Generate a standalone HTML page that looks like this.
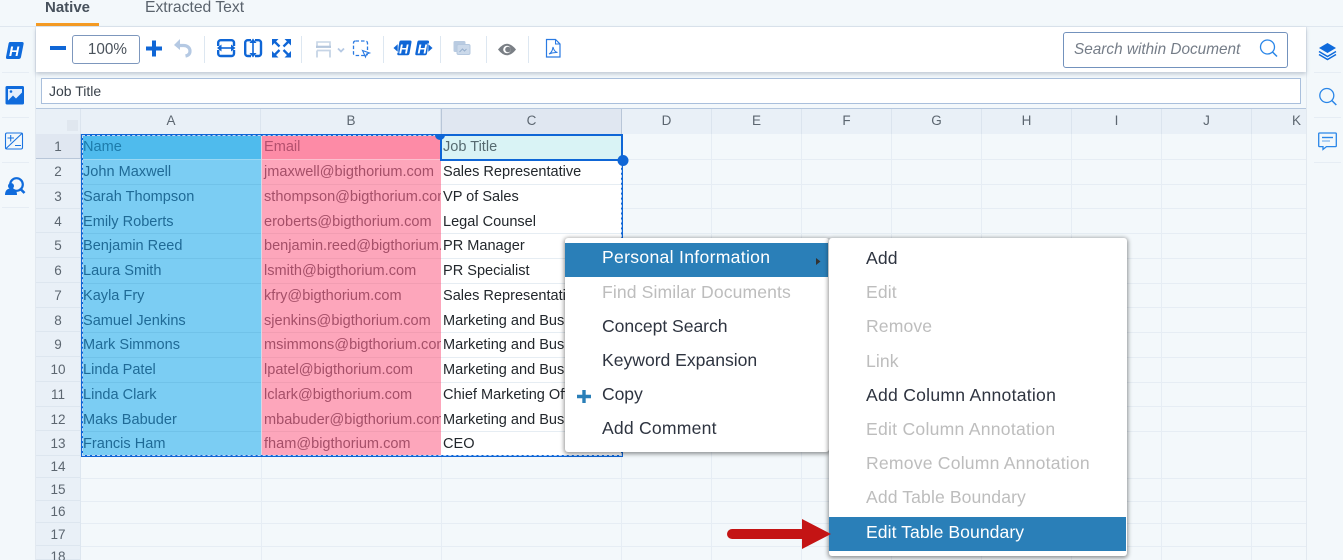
<!DOCTYPE html>
<html><head><meta charset="utf-8">
<style>
html,body{margin:0;padding:0;width:1343px;height:560px;overflow:hidden;background:#f3f8fb}
body{position:relative;font-family:"Liberation Sans",sans-serif;color:#2f3640}
div,span{position:absolute;white-space:nowrap;box-sizing:border-box}
svg{position:absolute;overflow:visible}
.h{background:#e6edf4}
.ch{top:109px;height:25px;background:#e9f0f7;border-right:1px solid #dbe4ee;text-align:center;font-size:13.5px;line-height:23px;color:#5c6670}
.rh{left:36px;width:45px;background:#e9f0f7;border-bottom:1px solid #dde6ef;border-right:1px solid #dde6ef;text-align:center;font-size:13.5px;color:#5c6670}
.a,.b,.c{height:25px;line-height:25px;font-size:14.55px;overflow:hidden;padding-left:2px}
.a{left:81px;width:180px;background:#7bcdf3;color:#1f6a96;border-bottom:1px solid #70c2e9}
.b{left:262px;width:179px;background:#fda6bb;color:#a54f68;border-bottom:1px solid #f29db2}
.c{left:441px;width:180px;background:#fff;color:#22272c;border-bottom:1px solid #e6edf3}
.m{background:#fff;border-radius:3px;box-shadow:0 1px 4px 1px rgba(0,0,0,.42)}
.i{font-size:17.6px;line-height:22px;color:#2e3440;letter-spacing:.1px}
.d{color:#bdbdbd}
.w{color:#fff}
</style></head>
<body>
<!-- tabs -->
<div style="left:0;top:26px;width:1343px;height:1px;background:#dfe7ef"></div>
<div style="left:45px;top:-2px;font-size:15px;line-height:20px;font-weight:bold;color:#47515c">Native</div>
<div style="left:145px;top:-2px;font-size:15.7px;line-height:20px;color:#5a636d">Extracted Text</div>
<div style="left:36px;top:23px;width:63px;height:3px;background:#f59b23"></div>
<!-- side rails -->
<div style="left:35px;top:27px;width:1px;height:533px;background:#e2e9f0"></div>
<div style="left:1306px;top:27px;width:1px;height:533px;background:#e2e9f0"></div>
<div class="h" style="left:2px;top:72px;width:27px;height:1px"></div>
<div class="h" style="left:2px;top:117px;width:27px;height:1px"></div>
<div class="h" style="left:2px;top:162px;width:27px;height:1px"></div>
<div class="h" style="left:2px;top:207px;width:27px;height:1px"></div>
<div class="h" style="left:1314px;top:72px;width:27px;height:1px"></div>
<div class="h" style="left:1314px;top:117px;width:27px;height:1px"></div>
<div class="h" style="left:1314px;top:162px;width:27px;height:1px"></div>
<svg style="left:0;top:0" width="36" height="210">
<path d="M10 42h12q2 0 1.600 2l-2.600 13q-.4 2-2.400 2H7.500q-1.800 0-1.500-2l2.500-13q.3-2 1.500-2z" fill="#0f6bdc"/>
<text x="9" y="56" font-family="Liberation Sans" font-size="14" font-weight="bold" font-style="italic" fill="#fff">H</text>
<rect x="5.500" y="86" width="18.500" height="18.500" rx="1.500" fill="#0f6bdc"/><rect x="8" y="89" width="14" height="11.500" fill="#e2eefc"/><path d="M8 100.500l5-5 3 3 6-6v8z" fill="#0f6bdc"/><circle cx="11" cy="91.500" r="1.300" fill="#0f6bdc"/>
<rect x="5.500" y="133" width="17" height="16" rx="1.500" fill="none" stroke="#1b74e0" stroke-width="1.100"/><path d="M5.500 149L22.500 133" stroke="#1b74e0" stroke-width="1.100"/><path d="M7.500 138h6.500M10.700 135v6.500M15 145.500h6" stroke="#1b74e0" stroke-width="1.100"/>
<circle cx="16.500" cy="184.500" r="6.300" fill="none" stroke="#0f6bdc" stroke-width="2.200"/><path d="M21 189.500l3.500 3.500" stroke="#0f6bdc" stroke-width="2.600"/><circle cx="11" cy="186" r="3" fill="#0f6bdc"/><path d="M5 195q0-6.500 6-6.500t6 6.500z" fill="#0f6bdc"/>
</svg>
<svg style="left:1306px;top:0" width="37" height="170">
<path d="M21.500 43l8.500 5-8.500 5-8.500-5z" fill="#0f6bdc"/><path d="M13 51.500l8.500 5 8.500-5M13 54.500l8.500 5 8.500-5" fill="none" stroke="#0f6bdc" stroke-width="1.500"/>
<circle cx="20.800" cy="95.500" r="7" fill="none" stroke="#2a86e8" stroke-width="1.300"/><path d="M25.800 100.500l4.500 4.500" stroke="#2a86e8" stroke-width="1.500"/>
<path d="M13.500 133h16q.8 0 .8.800v12q0 .8-.8.800h-9l-3.500 2.800v-2.800h-3.500q-.8 0-.8-.8v-12q0-.8.800-.8z" fill="none" stroke="#2a86e8" stroke-width="1.300"/><path d="M16 137.500h11" stroke="#2a86e8" stroke-width="1.400"/><path d="M16 141h8" stroke="#8dbdf0" stroke-width="1.400"/>
</svg>
<!-- grid headers -->
<div style="left:36px;top:108px;width:1270px;height:1px;background:#b5c7de"></div>
<div style="left:36px;top:109px;width:45px;height:25px;background:#e9f0f7;border-right:1px solid #dbe4ee"></div>
<div style="left:67px;top:120px;width:11px;height:11px;background:#e0e7ef"></div>
<div class="ch" style="left:81px;width:180px;padding-left:1px">A</div>
<div class="ch" style="left:261px;width:180px;padding-left:1px">B</div>
<div class="ch" style="left:441px;width:181px;background:#e0e7f1;border-left:1px solid #b8c6d8;border-right:1px solid #b8c6d8">C</div>
<div class="ch" style="left:622px;width:90px">D</div>
<div class="ch" style="left:712px;width:90px">E</div>
<div class="ch" style="left:802px;width:90px">F</div>
<div class="ch" style="left:892px;width:90px">G</div>
<div class="ch" style="left:982px;width:90px">H</div>
<div class="ch" style="left:1072px;width:90px">I</div>
<div class="ch" style="left:1162px;width:90px">J</div>
<div class="ch" style="left:1252px;width:54px;border-right:0;text-align:left;padding-left:40px">K</div>
<!-- grid lines -->
<div class="h" style="left:81px;top:159px;width:1225px;height:1px"></div>
<div class="h" style="left:81px;top:184px;width:1225px;height:1px"></div>
<div class="h" style="left:81px;top:208px;width:1225px;height:1px"></div>
<div class="h" style="left:81px;top:233px;width:1225px;height:1px"></div>
<div class="h" style="left:81px;top:258px;width:1225px;height:1px"></div>
<div class="h" style="left:81px;top:283px;width:1225px;height:1px"></div>
<div class="h" style="left:81px;top:307px;width:1225px;height:1px"></div>
<div class="h" style="left:81px;top:332px;width:1225px;height:1px"></div>
<div class="h" style="left:81px;top:357px;width:1225px;height:1px"></div>
<div class="h" style="left:81px;top:382px;width:1225px;height:1px"></div>
<div class="h" style="left:81px;top:406px;width:1225px;height:1px"></div>
<div class="h" style="left:81px;top:431px;width:1225px;height:1px"></div>
<div class="h" style="left:81px;top:478px;width:1225px;height:1px"></div>
<div class="h" style="left:81px;top:501px;width:1225px;height:1px"></div>
<div class="h" style="left:81px;top:523px;width:1225px;height:1px"></div>
<div class="h" style="left:81px;top:546px;width:1225px;height:1px"></div>
<div class="h" style="left:261px;top:457px;width:1px;height:103px"></div>
<div class="h" style="left:441px;top:457px;width:1px;height:103px"></div>
<div class="h" style="left:621px;top:134px;width:1px;height:426px"></div>
<div class="h" style="left:711px;top:134px;width:1px;height:426px"></div>
<div class="h" style="left:801px;top:134px;width:1px;height:426px"></div>
<div class="h" style="left:891px;top:134px;width:1px;height:426px"></div>
<div class="h" style="left:981px;top:134px;width:1px;height:426px"></div>
<div class="h" style="left:1071px;top:134px;width:1px;height:426px"></div>
<div class="h" style="left:1161px;top:134px;width:1px;height:426px"></div>
<div class="h" style="left:1251px;top:134px;width:1px;height:426px"></div>
<!-- row headers -->
<div class="rh" style="top:134px;height:25px;line-height:26px;background:#e0e7f1;border-bottom:1px solid #b8c6d8;border-right:1px solid #b8c6d8">1</div>
<div class="rh" style="top:159px;height:25px;line-height:26px">2</div>
<div class="rh" style="top:184px;height:25px;line-height:25px">3</div>
<div class="rh" style="top:209px;height:24px;line-height:26px">4</div>
<div class="rh" style="top:233px;height:25px;line-height:25px">5</div>
<div class="rh" style="top:258px;height:25px;line-height:25px">6</div>
<div class="rh" style="top:283px;height:25px;line-height:25px">7</div>
<div class="rh" style="top:308px;height:24px;line-height:26px">8</div>
<div class="rh" style="top:332px;height:25px;line-height:25px">9</div>
<div class="rh" style="top:357px;height:25px;line-height:25px">10</div>
<div class="rh" style="top:382px;height:25px;line-height:25px">11</div>
<div class="rh" style="top:407px;height:24px;line-height:26px">12</div>
<div class="rh" style="top:431px;height:25px;line-height:25px">13</div>
<div class="rh" style="top:456px;height:22px;line-height:21px">14</div>
<div class="rh" style="top:478px;height:23px;line-height:23px">15</div>
<div class="rh" style="top:501px;height:22px;line-height:21px">16</div>
<div class="rh" style="top:523px;height:23px;line-height:23px">17</div>
<div class="rh" style="top:546px;height:14px;line-height:21px">18</div>
<!-- cells -->
<div class="a" style="top:135px;background:#4fbbed;color:#1d7bab;border-bottom:1px solid #9ad8f4">Name</div><div class="b" style="top:135px;background:#fd8ba6;color:#b4506e;border-bottom:1px solid #fcc0ce">Email</div><div class="c" style="top:135px;background:#d9f3f5;color:#566a70">Job Title</div>
<div class="a" style="top:160px">John Maxwell</div><div class="b" style="top:160px">jmaxwell@bigthorium.com</div><div class="c" style="top:160px">Sales Representative</div>
<div class="a" style="top:185px">Sarah Thompson</div><div class="b" style="top:185px">sthompson@bigthorium.com</div><div class="c" style="top:185px">VP of Sales</div>
<div class="a" style="top:209px;line-height:26px">Emily Roberts</div><div class="b" style="top:209px;line-height:26px">eroberts@bigthorium.com</div><div class="c" style="top:209px;line-height:26px">Legal Counsel</div>
<div class="a" style="top:234px">Benjamin Reed</div><div class="b" style="top:234px">benjamin.reed@bigthorium.com</div><div class="c" style="top:234px">PR Manager</div>
<div class="a" style="top:259px">Laura Smith</div><div class="b" style="top:259px">lsmith@bigthorium.com</div><div class="c" style="top:259px">PR Specialist</div>
<div class="a" style="top:284px">Kayla Fry</div><div class="b" style="top:284px">kfry@bigthorium.com</div><div class="c" style="top:284px">Sales Representative</div>
<div class="a" style="top:308px;line-height:26px">Samuel Jenkins</div><div class="b" style="top:308px;line-height:26px">sjenkins@bigthorium.com</div><div class="c" style="top:308px;line-height:26px">Marketing and Business</div>
<div class="a" style="top:333px">Mark Simmons</div><div class="b" style="top:333px">msimmons@bigthorium.com</div><div class="c" style="top:333px">Marketing and Business</div>
<div class="a" style="top:358px">Linda Patel</div><div class="b" style="top:358px">lpatel@bigthorium.com</div><div class="c" style="top:358px">Marketing and Business</div>
<div class="a" style="top:383px">Linda Clark</div><div class="b" style="top:383px">lclark@bigthorium.com</div><div class="c" style="top:383px">Chief Marketing Officer</div>
<div class="a" style="top:407px;line-height:26px">Maks Babuder</div><div class="b" style="top:407px;line-height:26px">mbabuder@bigthorium.com</div><div class="c" style="top:407px;line-height:26px">Marketing and Business</div>
<div class="a" style="top:432px;height:24px">Francis Ham</div><div class="b" style="top:432px;height:24px">fham@bigthorium.com</div><div class="c" style="top:432px;height:24px">CEO</div>
<div style="left:261px;top:135px;width:1px;height:321px;background:#d9d6e4"></div>
<!-- selection -->
<div style="left:81px;top:134px;width:542px;height:323px;border:2px solid #0f66d6"></div>
<div style="left:82px;top:135px;width:540px;height:321px;border:1px dashed rgba(255,255,255,.75)"></div>
<div style="left:440px;top:134px;width:183px;height:27px;border:2px solid #0f66d6"></div>
<svg style="left:0;top:0" width="1343" height="560"><path d="M435 135a5 5 0 0 0 10 0z" fill="#0f66d6"/><circle cx="623" cy="160.500" r="5.500" fill="#0f66d6"/></svg>
<!-- toolbar -->
<div style="left:36px;top:27px;width:1270px;height:45px;background:#fff;box-shadow:0 2px 4px rgba(70,90,120,.3)"></div>
<div style="left:41px;top:78px;width:1260px;height:26px;background:#fff;border:1px solid #a9bfdc;font-size:14px;line-height:25px;padding-left:7px;color:#3a424b">Job Title</div>
<div style="left:72px;top:35px;width:68px;height:29px;background:#fff;border:1px solid #7d97bd;border-radius:3px;text-align:right;padding-right:12px;font-size:15.3px;line-height:28px;color:#4a525b">100%</div>
<div style="left:1063px;top:32px;width:225px;height:36px;background:#fff;border:1px solid #7392bd;border-radius:3px;font-size:15.35px;font-style:italic;line-height:33px;padding-left:10px;color:#757d88">Search within Document</div>
<svg style="left:0;top:0" width="1343" height="75">
<!-- minus plus undo -->
<path d="M50 48h16" stroke="#0f66d6" stroke-width="4"/>
<path d="M146 48.500h16M154 40.500v16" stroke="#0f66d6" stroke-width="4"/>
<path d="M178 45.500h5.500c4 0 6.500 2.500 6.500 5.500s-2 4.500-4.500 5" fill="none" stroke="#b5c9e3" stroke-width="3.200"/><path d="M174 45l6-6v11z" fill="#b5c9e3"/>
<path d="M204.500 36v27M301.500 36v27M383.500 36v27M440.500 36v27M486.500 36v27M528.500 36v27" stroke="#dde7f1" stroke-width="1"/>
<!-- fit width -->
<rect x="218.200" y="40.200" width="15.800" height="15.800" rx="2.500" fill="none" stroke="#0f66d6" stroke-width="2.400"/><path d="M216 48h3M233 48h3" stroke="#fff" stroke-width="4"/><path d="M219 48h14.500" stroke="#0f66d6" stroke-width="1.600"/><path d="M217 48l4.500-3.500v7zM235.500 48l-4.500-3.500v7z" fill="#0f66d6"/>
<!-- fit height -->
<rect x="245.200" y="40.200" width="15.800" height="15.800" rx="2.500" fill="none" stroke="#0f66d6" stroke-width="2.400"/><path d="M253 38v3M253 55v3" stroke="#fff" stroke-width="4"/><path d="M253 41v14.500" stroke="#0f66d6" stroke-width="1.600"/><path d="M253 38.500l3.500 4.500h-7zM253 57.500l3.500-4.500h-7z" fill="#0f66d6"/>
<!-- fullscreen -->
<path d="M272 39h6.500l-6.500 6.500zM291 39h-6.500l6.500 6.500zM272 57.500h6.500l-6.500-6.500zM291 57.500h-6.500l6.500-6.500z" fill="#0f66d6"/><path d="M275 42l4.500 4.500M288 42l-4.500 4.500M275 54.500l4.500-4.500M288 54.500l-4.500-4.500" stroke="#0f66d6" stroke-width="2.300"/>
<!-- save -->
<path d="M317 48v-6h13v6" fill="none" stroke="#c7d5e6" stroke-width="1.600"/><path d="M316 46.800h15" stroke="#b5c7dd" stroke-width="2.200"/><path d="M317 50.500h13v7M317 50.500v7" fill="none" stroke="#c7d5e6" stroke-width="1.800"/>
<path d="M338 48.500l3 3 3-3" fill="none" stroke="#b5c9e3" stroke-width="1.800"/>
<rect x="353.500" y="41" width="14" height="14.500" rx="2" fill="none" stroke="#2a7ae2" stroke-width="1.300" stroke-dasharray="3.500 2"/>
<path d="M362.500 50.500l7 2.500-3 1-1 3z" fill="#fff" stroke="#2a7ae2" stroke-width="1.100"/>
<!-- H arrows -->
<path d="M401 40.500h9q1.800 0 1.500 1.700l-2 11.300q-.3 1.700-2 1.700h-9q-1.500 0-1.200-1.700l2-11.300q.3-1.700 1.700-1.700z" fill="#0f66d6"/>
<path d="M393 48l5-4.500v9z" fill="#0f66d6" stroke="#fff" stroke-width=".6"/>
<text x="399" y="53.500" font-family="Liberation Sans" font-size="13" font-weight="bold" font-style="italic" fill="#fff">H</text>
<path d="M419 40.500h8.500q1.800 0 1.500 1.700l-2 11.300q-.3 1.700-2 1.700h-8.500q-1.500 0-1.200-1.700l2-11.300q.3-1.700 1.700-1.700z" fill="#0f66d6"/>
<path d="M433 48l-5-4.500v9z" fill="#0f66d6" stroke="#fff" stroke-width=".6"/>
<text x="417.500" y="53.500" font-family="Liberation Sans" font-size="13" font-weight="bold" font-style="italic" fill="#fff">H</text>
<!-- copy image -->
<rect x="453.500" y="41" width="12" height="11" rx="1.500" fill="#b9cbe1"/><rect x="457" y="44.500" width="13" height="10" rx="1.500" fill="#cbd9ea" stroke="#b5c8df"/><path d="M459.500 52l3-3 2 2 2-2" fill="none" stroke="#98b0cd"/>
<!-- eye -->
<path d="M498 49.500q9-11.500 18 0-9 11.500-18 0z" fill="#7a7f85"/><circle cx="507" cy="49.500" r="3.800" fill="#fff"/><circle cx="508" cy="49.500" r="2.800" fill="#7a7f85"/>
<!-- pdf -->
<path d="M546.500 39.500h9l4.500 4.500v13h-13.500z" fill="#fff" stroke="#2a7ae2" stroke-width="1.200"/><path d="M555.500 39.500v4.500h4.500" fill="none" stroke="#2a7ae2"/><path d="M549 54c2.500-1 3.500-3.500 4-7 .7 3 2 5 4.500 5.500-2.500-.2-5.500.2-8.500 1.500z" fill="none" stroke="#2a7ae2" stroke-width="1"/>
<!-- search -->
<circle cx="1267.500" cy="47" r="7" fill="none" stroke="#2a86e8" stroke-width="1.300"/><path d="M1272.500 52l4.500 4.500" stroke="#2a86e8" stroke-width="1.500"/>
</svg>
<!-- menus -->
<div class="m" style="left:565px;top:238px;width:264px;height:214px"></div>
<div style="left:565px;top:243px;width:263px;height:34px;background:#2a7fb8"></div>
<svg style="left:815px;top:256px" width="8" height="10"><path d="M1 2l4.500 3.500L1 9z" fill="#333"/></svg>
<div class="i w" style="left:602px;top:246px;letter-spacing:.3px">Personal Information</div>
<div class="i d" style="left:602px;top:281px">Find Similar Documents</div>
<div class="i" style="left:602px;top:315px;letter-spacing:-.05px">Concept Search</div>
<div class="i" style="left:602px;top:349px;letter-spacing:-.02px">Keyword Expansion</div>
<div class="i" style="left:602px;top:383px;letter-spacing:-.1px">Copy</div>
<div class="i" style="left:602px;top:417px;letter-spacing:.2px">Add Comment</div>
<svg style="left:576px;top:389px" width="16" height="16"><path d="M1 7.500h14M8 1v13" stroke="#2a7fb8" stroke-width="3.400"/></svg>
<div class="m" style="left:829px;top:238px;width:298px;height:318px"></div>
<div class="i" style="left:866px;top:247px">Add</div>
<div class="i d" style="left:866px;top:281px">Edit</div>
<div class="i d" style="left:866px;top:315px">Remove</div>
<div class="i d" style="left:866px;top:350px">Link</div>
<div class="i" style="left:866px;top:384px;letter-spacing:.25px">Add Column Annotation</div>
<div class="i d" style="left:866px;top:418px;letter-spacing:.25px">Edit Column Annotation</div>
<div class="i d" style="left:866px;top:452px;letter-spacing:.2px">Remove Column Annotation</div>
<div class="i d" style="left:866px;top:486px">Add Table Boundary</div>
<div style="left:829px;top:517px;width:297px;height:34px;background:#2a7fb8"></div>
<div class="i w" style="left:866px;top:521px;letter-spacing:.05px">Edit Table Boundary</div>
<!-- arrow -->
<svg style="left:0;top:0" width="1343" height="560"><path d="M732 534h72" stroke="#c41414" stroke-width="10" stroke-linecap="round"/><path d="M802 519l29 15-29 15z" fill="#c41414"/></svg>
</body></html>
